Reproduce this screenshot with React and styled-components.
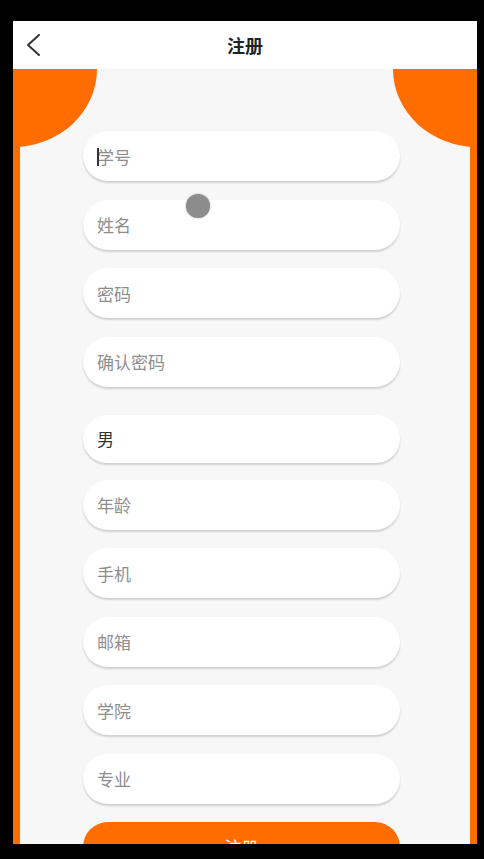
import React from "react";
import styled, { createGlobalStyle } from "styled-components";

const GlobalStyle = createGlobalStyle`
  html, body {
    margin: 0;
    padding: 0;
    background: #000;
  }
  body {
    font-family: "Noto Sans CJK SC", "Noto Sans", sans-serif;
  }
`;

const ORANGE = "#ff6c00";

const Frame = styled.div`
  width: 484px;
  height: 859px;
  box-sizing: border-box;
  padding: 21px 7px 15px 13px;
  background: #000;
  position: relative;
`;

const Screen = styled.div`
  height: 100%;
  display: flex;
  flex-direction: column;
  overflow: hidden;
  background: #fff;
`;

const Header = styled.header`
  flex: 0 0 48px;
  display: flex;
  align-items: center;
  justify-content: center;
  position: relative;
  background: #fff;
`;

const BackButton = styled.button`
  position: absolute;
  left: 12px;
  top: 12px;
  padding: 0;
  border: 0;
  background: none;
  display: flex;
`;

const Title = styled.h1`
  margin: 0;
  font-size: 18px;
  font-weight: 700;
  color: #222;
`;

const Body = styled.main`
  flex: 1;
  position: relative;
  background: ${ORANGE};
  padding: 0 7px;
  display: flex;
  flex-direction: column;

  &::before,
  &::after {
    content: "";
    position: absolute;
    top: 0;
    width: 84px;
    height: 78px;
    background: ${ORANGE};
  }
  &::before {
    left: 0;
    border-bottom-right-radius: 100%;
  }
  &::after {
    right: 0;
    border-bottom-left-radius: 100%;
  }
`;

const Panel = styled.div`
  flex: 1;
  background: #f7f7f7;
  padding: 62px 0 0 63px;
`;

const Form = styled.form`
  width: 317px;
  display: flex;
  flex-direction: column;
`;

const Field = styled.div`
  position: relative;
  height: ${(p) => (p.$short ? 48 : 50)}px;
  margin-top: ${(p) => p.$gap}px;
  border-radius: 25px;
  background: #fff;
  box-shadow: 0 2px 2px rgba(0, 0, 0, 0.16);
  display: flex;
  align-items: center;
  padding: 0 14px;
`;

const Input = styled.input`
  flex: 1;
  min-width: 0;
  border: 0;
  outline: none;
  background: transparent;
  padding: 0;
  font-family: inherit;
  font-size: 17px;
  color: #333;
  &::placeholder {
    color: #8e8e8e;
  }
`;

const Caret = styled.span`
  position: absolute;
  left: 14px;
  top: 17px;
  width: 1.5px;
  height: 18px;
  background: #333;
`;

const Submit = styled.button`
  margin-top: 18px;
  height: 50px;
  border: 0;
  border-radius: 25px;
  background: ${ORANGE};
  color: #fff;
  font-family: inherit;
  font-size: 17px;
`;

const Touch = styled.span`
  position: absolute;
  left: 186px;
  top: 194px;
  width: 24px;
  height: 24px;
  border-radius: 50%;
  background: #8c8c8c;
  box-shadow: 0 0 2px rgba(140, 140, 140, 0.8);
`;

const fields = [
  { placeholder: "学号", caret: true },
  { placeholder: "姓名" },
  { placeholder: "密码" },
  { placeholder: "确认密码" },
  { value: "男", short: true, gap: 28 },
  { placeholder: "年龄", gap: 17 },
  { placeholder: "手机" },
  { placeholder: "邮箱" },
  { placeholder: "学院" },
  { placeholder: "专业" },
];

export default function App() {
  return (
    <>
      <GlobalStyle />
      <Frame>
        <Screen>
          <Header>
            <BackButton aria-label="返回">
              <svg width="16" height="24" viewBox="0 0 16 24">
                <polyline
                  points="14,2 3,12 14,22"
                  fill="none"
                  stroke="#333"
                  strokeWidth="2"
                  strokeLinecap="round"
                  strokeLinejoin="round"
                />
              </svg>
            </BackButton>
            <Title>注册</Title>
          </Header>
          <Body>
            <Panel>
              <Form onSubmit={(e) => e.preventDefault()}>
                {fields.map((f, i) => (
                  <Field key={i} $short={f.short} $gap={i === 0 ? 0 : f.gap ?? 18.5}>
                    {f.caret && <Caret />}
                    <Input
                      placeholder={f.placeholder}
                      defaultValue={f.value}
                      readOnly={!!f.value}
                    />
                  </Field>
                ))}
                <Submit type="submit">注册</Submit>
              </Form>
            </Panel>
          </Body>
        </Screen>
        <Touch />
      </Frame>
    </>
  );
}
